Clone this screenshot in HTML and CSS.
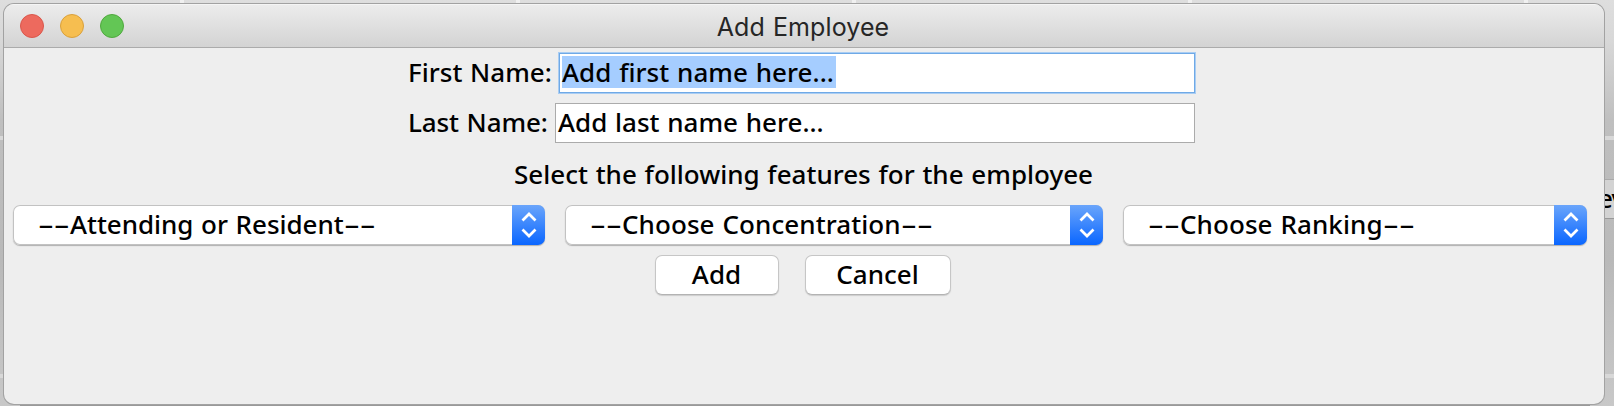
FILE: index.html
```html
<!DOCTYPE html>
<html lang="en">
<head>
<meta charset="utf-8">
<title>Add Employee</title>
<link rel="stylesheet" href="styles.css">
</head>
<body>
<div class="behind"><span class="behind-button">ev</span></div>
<main class="window">
  <header class="titlebar">
    <div class="lights"><i class="light red"></i><i class="light yellow"></i><i class="light green"></i></div>
    <h1 class="title">Add Employee</h1>
  </header>
  <div class="row first">
    <label class="label">First Name:</label>
    <div class="field focused"><span class="selection">Add first name here...</span></div>
  </div>
  <div class="row last">
    <label class="label">Last Name:</label>
    <div class="field">Add last name here...</div>
  </div>
  <p class="hint">Select the following features for the employee</p>
  <div class="combos">
    <div class="combo c1"><span class="value"><span class="dash">--</span>Attending or Resident<span class="dash">--</span></span><span class="arrows"><svg width="16" height="26" viewBox="0 0 16 26"><path d="M1.500 8.500 8 2l6.500 6.500M1.500 17.500 8 24l6.500-6.500"/></svg></span></div>
    <div class="combo c2"><span class="value"><span class="dash">--</span>Choose Concentration<span class="dash">--</span></span><span class="arrows"><svg width="16" height="26" viewBox="0 0 16 26"><path d="M1.500 8.500 8 2l6.500 6.500M1.500 17.500 8 24l6.500-6.500"/></svg></span></div>
    <div class="combo c3"><span class="value"><span class="dash">--</span>Choose Ranking<span class="dash">--</span></span><span class="arrows"><svg width="16" height="26" viewBox="0 0 16 26"><path d="M1.500 8.500 8 2l6.500 6.500M1.500 17.500 8 24l6.500-6.500"/></svg></span></div>
  </div>
  <div class="buttons">
    <button class="button add">Add</button>
    <button class="button cancel">Cancel</button>
  </div>
</main>
</body>
</html>
```
FILE: styles.css
```css
* { box-sizing: border-box; }
body {
  margin: 0;
  width: 1614px;
  height: 406px;
  overflow: hidden;
  padding: 4px;
  font: 500 26px/32px "Noto Sans", sans-serif;
  word-spacing: 1px;
  color: #000;
  background:
    linear-gradient(#999, #999) 20px 404px / 1570px 2px no-repeat,
    linear-gradient(#d8d8d8, #d8d8d8) 0 136px / 100% 4px no-repeat,
    linear-gradient(#d8d8d8, #d8d8d8) 0 374px / 100% 4px no-repeat,
    repeating-linear-gradient(90deg, transparent 0 180px, #f0f0f0 180px 184px, transparent 184px 336px) 0 0 / 336px 4px repeat-x,
    linear-gradient(#dedede 0, #d8d8d8 40px, #bfbfbf 120px, #b9b9b9 260px, #c8c8c8 100%);
}
.behind { position: absolute; left: 1604px; top: 179px; width: 10px; height: 40px; overflow: hidden; background: #d3d3d3; border-top: 1px solid #aaa; border-bottom: 1px solid #999; }
.behind-button { display: block; margin-left: -6px; line-height: 36px; letter-spacing: -1px; }
.window {
  position: relative;
  width: 1600px;
  height: 400px;
  border-radius: 10px;
  overflow: hidden;
  background: #eee;
  box-shadow: 0 0 0 1px #a2a2a2;
}
.titlebar { display: grid; grid-template-columns: 1fr auto 1fr; align-items: center; height: 44px; background: linear-gradient(#ececec, #d3d3d3); border-top: 1px solid #f5f5f5; border-bottom: 1px solid #ababab; }
.lights { display: flex; gap: 16px; padding-left: 16px; }
.light { width: 24px; height: 24px; border-radius: 50%; border: 1px solid; }
.red { background: #ed6a5e; border-color: #d9574c; }
.yellow { background: #f6be50; border-color: #d9a03c; }
.green { background: #63c655; border-color: #50a83e; }
.title { margin: 0; padding: 2px 2px 0 0; font: 400 25px/32px Inter, sans-serif; letter-spacing: .1px; color: #262626; white-space: nowrap; }
.row { display: flex; align-items: center; padding-left: 403px; }
.first { padding-top: 4px; }
.last { padding-top: 9px; }
.label { padding: 0 0 2px 1px; white-space: nowrap; }
.first .label { width: 152px; }
.last .label { width: 148px; letter-spacing: -.1px; }
.field { height: 40px; width: 640px; padding: 2px 2px; border: 1px solid #ababab; background: #fff; white-space: nowrap; }
.focused { width: 636px; padding: 2px; border-color: #6fa9e6; box-shadow: 0 0 0 1px #a9cdf3; letter-spacing: .04px; }
.first .field { margin: 1px 0; }
.selection { display: block; height: 32px; width: 274px; line-height: 32px; background: #a5cdff; }
.hint { margin: 15px 0 0; padding-left: 510px; white-space: nowrap; }
.combos { display: flex; gap: 20px; padding: 15px 0 0 9px; }
.combo { display: flex; height: 40px; overflow: hidden; border-radius: 7px; background: #fff; box-shadow: inset 0 0 0 1px #c2c2c2, 0 1px 1px #b0b0b0; }
.c1 { width: 532px; }
.c2 { width: 538px; }
.c3 { width: 464px; }
.value { flex: 1; padding: 3px 0 0 25px; letter-spacing: .08px; white-space: nowrap; }
.c1 .value { letter-spacing: -.04px; }
.dash { display: inline-block; width: 32px; transform: scaleX(1.9); transform-origin: 0 0; }
.arrows { display: flex; align-items: center; justify-content: center; width: 33px; background: linear-gradient(#6aa5fb, #0a66ff); }
.arrows path { fill: none; stroke: #fff; stroke-width: 2.7; }
.buttons { display: flex; gap: 26px; padding: 10px 0 0 651px; }
.button { height: 40px; padding: 0 1px 2px 0; border: 1px solid #c6c6c6; border-bottom-color: #b3b3b3; border-radius: 7px; background: #fff; font: inherit; color: #000; box-shadow: 0 1px 1px #ccc; }
.add { width: 124px; }
.cancel { width: 146px; }
```
